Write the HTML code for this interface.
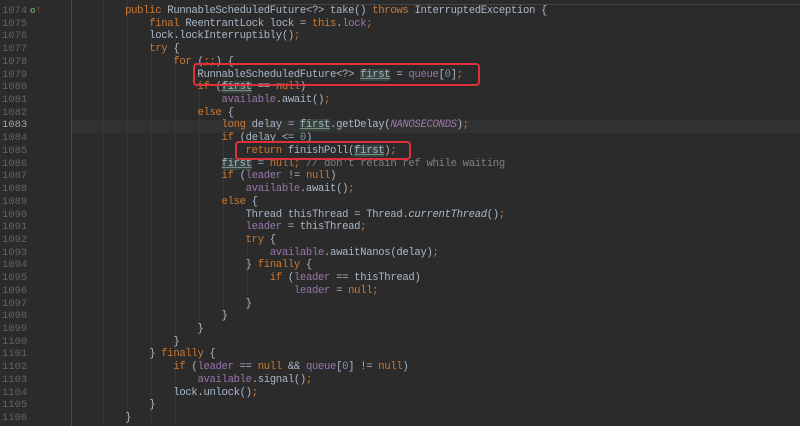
<!DOCTYPE html>
<html><head><meta charset="utf-8"><style>
html,body{margin:0;padding:0;width:800px;height:426px;overflow:hidden;background:#2b2b2b;}
.ln{position:absolute;left:2px;width:30px;font:10.5px "Liberation Mono",monospace;color:#606366;line-height:12px}
.cd{position:absolute;left:101px;font:10.6px "Liberation Mono",monospace;letter-spacing:-0.33px;color:#a9b7c6;white-space:pre;line-height:12px}
.k{color:#cc7832}.f{color:#9876aa}.n{color:#6897bb}.c{color:#808080}.i{font-style:italic}
.s{color:#9876aa;font-style:italic}
.u{background:#37443f;text-decoration:underline;text-decoration-color:#7a8a80}
.g{position:absolute;top:0;height:426px;width:1px;background:#373737}
.box{position:absolute;border:2px solid #e0303c;border-radius:4px}
</style></head><body>
<div style="position:absolute;left:72px;top:120px;width:728px;height:13px;background:#323232"></div>
<div style="position:absolute;left:230px;top:4px;width:570px;height:1px;background:#444"></div>
<div style="position:absolute;left:71px;top:0;width:1px;height:426px;background:#4a4a4a"></div>
<div class="g" style="left:103px"></div><div class="g" style="left:127px"></div>
<div class="g" style="left:151px"></div><div class="g" style="left:175px"></div>
<div class="g" style="left:199px;top:80px;height:250px"></div>
<div class="g" style="left:223px;top:130px;height:190px"></div>
<div class="g" style="left:247px;top:240px;height:70px"></div>
<div style="position:absolute;left:30px;top:5px;font:bold 9px 'Liberation Sans',sans-serif;color:#5fa36a">o</div>
<div style="position:absolute;left:36px;top:4px;font:9px 'Liberation Sans',sans-serif;color:#d06050">↑</div>
<div id="L"></div>
<div class="box" style="left:193px;top:63px;width:283px;height:19px"></div>
<div class="box" style="left:235px;top:141px;width:172px;height:15px"></div>
<script>
var lines=[
'    <span class="k">public</span> RunnableScheduledFuture&lt;?&gt; take() <span class="k">throws</span> InterruptedException {',
'        <span class="k">final</span> ReentrantLock lock = <span class="k">this</span>.<span class="f">lock</span><span class="k">;</span>',
'        lock.lockInterruptibly()<span class="k">;</span>',
'        <span class="k">try</span> {',
'            <span class="k">for</span> (<span class="k">;;</span>) {',
'                RunnableScheduledFuture&lt;?&gt; <span class="u">first</span> = <span class="f">queue</span>[<span class="n">0</span>]<span class="k">;</span>',
'                <span class="k">if</span> (<span class="u">first</span> == <span class="k">null</span>)',
'                    <span class="f">available</span>.await()<span class="k">;</span>',
'                <span class="k">else</span> {',
'                    <span class="k">long</span> delay = <span class="u">first</span>.getDelay(<span class="s">NANOSECONDS</span>)<span class="k">;</span>',
'                    <span class="k">if</span> (delay &lt;= <span class="n">0</span>)',
'                        <span class="k">return</span> finishPoll(<span class="u">first</span>)<span class="k">;</span>',
'                    <span class="u">first</span> = <span class="k">null;</span> <span class="c">// don\'t retain ref while waiting</span>',
'                    <span class="k">if</span> (<span class="f">leader</span> != <span class="k">null</span>)',
'                        <span class="f">available</span>.await()<span class="k">;</span>',
'                    <span class="k">else</span> {',
'                        Thread thisThread = Thread.<span class="i">currentThread</span>()<span class="k">;</span>',
'                        <span class="f">leader</span> = thisThread<span class="k">;</span>',
'                        <span class="k">try</span> {',
'                            <span class="f">available</span>.awaitNanos(delay)<span class="k">;</span>',
'                        } <span class="k">finally</span> {',
'                            <span class="k">if</span> (<span class="f">leader</span> == thisThread)',
'                                <span class="f">leader</span> = <span class="k">null;</span>',
'                        }',
'                    }',
'                }',
'            }',
'        } <span class="k">finally</span> {',
'            <span class="k">if</span> (<span class="f">leader</span> == <span class="k">null</span> &amp;&amp; <span class="f">queue</span>[<span class="n">0</span>] != <span class="k">null</span>)',
'                <span class="f">available</span>.signal()<span class="k">;</span>',
'            lock.unlock()<span class="k">;</span>',
'        }',
'    }'];
var h='';
for(var i=0;i<lines.length;i++){var t=Math.round(5+i*12.72);
h+='<div class="ln" style="top:'+t+'px;'+(i==9?'color:#a4a3a3':'')+'">'+(1074+i)+'</div>';
h+='<div class="cd" style="top:'+t+'px">'+lines[i]+'</div>';}
document.getElementById('L').innerHTML=h;
</script>
</body></html>
